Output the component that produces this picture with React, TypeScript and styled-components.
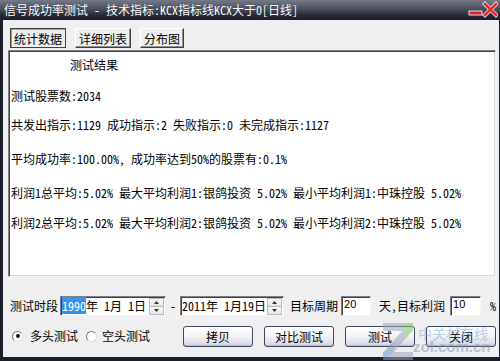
import React from "react";
import styled, { createGlobalStyle } from "styled-components";

const FONT = `"Noto Sans Mono CJK SC", "Noto Sans CJK SC", "DejaVu Sans", sans-serif`;

const Global = createGlobalStyle`
  html, body { margin: 0; padding: 0; background: #1b1f2c; }
  body { font-family: ${FONT}; font-size: 12px; color: #000; }
  * { box-sizing: border-box; }
`;

const Window = styled.div`
  position: relative;
  width: 500px;
  height: 361px;
  display: flex;
  flex-direction: column;
  background: #1b1f2c;
  overflow: hidden;
`;

const TitleBar = styled.div`
  height: 20px;
  flex: none;
  display: flex;
  align-items: center;
  padding-left: 4px;
  padding-right: 2px;
  background: linear-gradient(#757a88 0%, #4a4f5f 45%, #262a38 75%, #1a1d29 100%);
  color: #fff;
  font-size: 12px;
  white-space: pre;
  line-height: 20px;
`;

const TitleText = styled.span`
  flex: 1;
  text-shadow: 0 0 1px rgba(0, 0, 0, 0.4);
`;

const Frame = styled.div`
  flex: 1;
  display: flex;
  padding: 0 5px 4px 3px;
`;

const Body = styled.div`
  flex: 1;
  display: flex;
  flex-direction: column;
  background: #efefef;
  padding: 0 3px 0 5px;
`;

const TabRow = styled.div`
  display: flex;
  gap: 9px;
  margin-top: 8px;
  padding-left: 2px;
  height: 20px;
`;

const Tab = styled.div<{ $active?: boolean }>`
  height: 20px;
  padding: 0 3px;
  display: flex;
  align-items: center;
  background: #efefef;
  border: 1px solid;
  border-color: ${(p) => (p.$active ? "#404040" : "#ffffff #404040 #404040 #ffffff")};
  box-shadow: ${(p) =>
    p.$active ? "inset 1px 1px 0 #a0a0a0" : "inset -1px -1px 0 #909090"};
  white-space: pre;
`;

const Panel = styled.div`
  margin-top: 2px;
  height: 227px;
  background: #fff;
  border: 1px solid;
  border-color: #808080 #f4f4f4 #f4f4f4 #808080;
  box-shadow: inset 1px 1px 0 #404040, inset -1px -1px 0 #d8d8d8;
  padding: 3px 0 0 2px;
`;

const Line = styled.div<{ $mt: number; $ml?: number }>`
  margin-top: ${(p) => p.$mt}px;
  margin-left: ${(p) => p.$ml ?? 0}px;
  height: 16px;
  line-height: 16px;
  white-space: pre;
`;

const Row = styled.div<{ $mt: number }>`
  display: flex;
  align-items: center;
  height: 20px;
  margin-top: ${(p) => p.$mt}px;
  padding-left: 2px;
  white-space: pre;
`;

const Label = styled.span<{ $ml?: number }>`
  margin-left: ${(p) => p.$ml ?? 0}px;
  line-height: 20px;
`;

const Sunken = styled.div<{ $w: number; $ml: number }>`
  width: ${(p) => p.$w}px;
  height: 20px;
  margin-left: ${(p) => p.$ml}px;
  background: #fff;
  border: 1px solid;
  border-color: #808080 #f4f4f4 #f4f4f4 #808080;
  box-shadow: inset 1px 1px 0 #404040;
  display: flex;
  align-items: center;
`;

const DateText = styled.span`
  padding-left: 1px;
  line-height: 16px;
`;

const Selected = styled.span`
  background: #3592f0;
  color: #fff;
`;

const Spinner = styled.div`
  margin-left: auto;
  margin-right: 1px;
  width: 15px;
  height: 17px;
  display: flex;
  flex-direction: column;
`;

const SpinBtn = styled.div`
  flex: 1;
  display: flex;
  align-items: center;
  justify-content: center;
  background: linear-gradient(#fbfbfb, #e6e6e6);
  border: 1px solid #b8b8b8;
  & + & { border-top: none; }
`;

const SmallInput = styled(Sunken)`
  align-items: flex-start;
  font-size: 11px;
  padding: 1px 0 0 2px;
  line-height: 13px;
  font-family: "Liberation Sans", "DejaVu Sans", sans-serif;
`;

const RadioCircle = styled.span<{ $ml: number; $checked?: boolean }>`
  width: 11px;
  height: 11px;
  margin-left: ${(p) => p.$ml}px;
  border-radius: 50%;
  border: 1px solid;
  border-color: #7a7a7a #dcdcdc #dcdcdc #7a7a7a;
  background: #fff;
  display: flex;
  align-items: center;
  justify-content: center;
  &::after {
    content: "";
    width: 4px;
    height: 4px;
    border-radius: 50%;
    background: ${(p) => (p.$checked ? "#111" : "transparent")};
  }
`;

const Button = styled.div<{ $ml: number }>`
  width: 70px;
  height: 21px;
  margin-left: ${(p) => p.$ml}px;
  display: flex;
  align-items: center;
  justify-content: center;
  border: 1px solid #3d4663;
  border-radius: 3px;
  background: linear-gradient(#ffffff 0%, #f4f4f6 45%, #e2e3ea 80%, #c9cfe0 100%);
  box-shadow: inset 0 -1px 0 #b9c1d8;
`;

const Watermark = styled.div`
  position: absolute;
  left: 380px;
  top: 318px;
  width: 120px;
  height: 43px;
  pointer-events: none;
  opacity: 0.55;
`;

const WmCn = styled.div`
  position: absolute;
  left: 38px;
  top: 8px;
  font-size: 14px;
  line-height: 14px;
  color: #7fb1e0;
  letter-spacing: 0px;
  white-space: pre;
`;

const WmEn = styled.div`
  position: absolute;
  left: 33px;
  top: 21px;
  font-family: "Liberation Sans", Arial, sans-serif;
  font-weight: bold;
  font-size: 15px;
  line-height: 15px;
  color: #8c9fb8;
  white-space: pre;
`;

const UpArrow = () => (
  <svg width="5" height="3" viewBox="0 0 5 3">
    <path d="M2.5 0 L5 3 L0 3 Z" fill="#333" />
  </svg>
);
const DownArrow = () => (
  <svg width="5" height="3" viewBox="0 0 5 3">
    <path d="M0 0 L5 0 L2.5 3 Z" fill="#333" />
  </svg>
);

const Spin = () => (
  <Spinner>
    <SpinBtn>
      <UpArrow />
    </SpinBtn>
    <SpinBtn>
      <DownArrow />
    </SpinBtn>
  </Spinner>
);

const TitleButtons = () => (
  <svg width="30" height="20" viewBox="0 0 30 20">
    <rect x="0.5" y="10.5" width="14" height="5" fill="#fff" opacity="0.85" />
    <rect x="1.5" y="11.5" width="12" height="3" fill="#d8232a" />
    <path d="M17 4 L28 15 M28 4 L17 15" stroke="#fff" strokeWidth="4.2" strokeLinecap="square" opacity="0.85" />
    <path d="M17 4 L28 15 M28 4 L17 15" stroke="#e02a2f" strokeWidth="2.6" strokeLinecap="square" />
  </svg>
);

export default function App() {
  return (
    <>
      <Global />
      <Window>
        <TitleBar>
          <TitleText>信号成功率测试 - 技术指标:KCX指标线KCX大于0[日线]</TitleText>
          <TitleButtons />
        </TitleBar>
        <Frame>
          <Body>
            <TabRow>
              <Tab $active>统计数据</Tab>
              <Tab>详细列表</Tab>
              <Tab>分布图</Tab>
            </TabRow>
            <Panel>
              <Line $mt={3} $ml={59}>测试结果</Line>
              <Line $mt={15}>测试股票数:2034</Line>
              <Line $mt={13}>共发出指示:1129 成功指示:2 失败指示:0 未完成指示:1127</Line>
              <Line $mt={18}>平均成功率:100.00%, 成功率达到50%的股票有:0.1%</Line>
              <Line $mt={18}>利润1总平均:5.02% 最大平均利润1:银鸽投资 5.02% 最小平均利润1:中珠控股 5.02%</Line>
              <Line $mt={14}>利润2总平均:5.02% 最大平均利润2:银鸽投资 5.02% 最小平均利润2:中珠控股 5.02%</Line>
            </Panel>
            <Row $mt={19}>
              <Label>测试时段</Label>
              <Sunken $w={106} $ml={2}>
                <DateText>
                  <Selected>1990</Selected>年 1月 1日
                </DateText>
                <Spin />
              </Sunken>
              <Label $ml={4}>-</Label>
              <Sunken $w={104} $ml={4}>
                <DateText>2011年 1月19日</DateText>
                <Spin />
              </Sunken>
              <Label $ml={6}>目标周期</Label>
              <SmallInput $w={30} $ml={3}>20</SmallInput>
              <Label $ml={8}>天,目标利润</Label>
              <SmallInput $w={31} $ml={5}>10</SmallInput>
              <Label $ml={9}>%</Label>
            </Row>
            <Row $mt={10}>
              <RadioCircle $ml={2} $checked />
              <Label $ml={7}>多头测试</Label>
              <RadioCircle $ml={8} />
              <Label $ml={5}>空头测试</Label>
              <Button $ml={33}>拷贝</Button>
              <Button $ml={11}>对比测试</Button>
              <Button $ml={11}>测试</Button>
              <Button $ml={11}>关闭</Button>
            </Row>
          </Body>
        </Frame>
        <Watermark>
          <svg width="36" height="42" viewBox="0 0 36 42" style={{ position: "absolute", left: 0, top: 2 }}>
            <path d="M3 3 L33 3 L33 10 L14 32 L33 32 L33 40 L3 40 L3 33 L22 11 L3 11 Z" fill="#9aa7bd" />
            <path d="M22 3 L33 3 L33 10 L26 18 Z" fill="#7cc36a" />
            <path d="M3 33 L12 23 L14 32 L3 40 Z" fill="#6f95c9" />
          </svg>
          <WmCn>中关村在线</WmCn>
          <WmEn>zol.com.cn</WmEn>
        </Watermark>
      </Window>
    </>
  );
}
